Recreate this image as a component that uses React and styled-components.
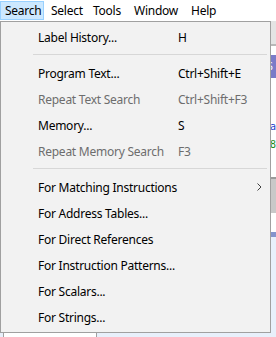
import React from "react";
import styled, { createGlobalStyle } from "styled-components";

const Global = createGlobalStyle`
  html, body { margin: 0; padding: 0; background: #ffffff; overflow: hidden; }
  * { box-sizing: border-box; }
`;

const Screen = styled.div`
  position: relative;
  width: 276px;
  height: 337px;
  overflow: hidden;
  font-family: "Noto Sans", "DejaVu Sans", sans-serif;
  font-size: 12px;
  letter-spacing: -0.25px;
  background: #ffffff;
`;

const MenuBar = styled.div`
  display: flex;
  align-items: stretch;
  height: 21px;
  padding: 1px 0 1px 0;
  background: #ffffff;
`;

const BarItem = styled.div`
  display: flex;
  align-items: center;
  width: ${(p) => p.$w}px;
  padding-left: ${(p) => p.$pl}px;
  color: #000;
  border: 1px solid ${(p) => (p.$active ? "#99d1ff" : "transparent")};
  background: ${(p) => (p.$active ? "#cce8ff" : "transparent")};
  line-height: 1;
  white-space: nowrap;
`;

const Workspace = styled.div`
  display: grid;
  grid-template-columns: 97px 1fr;
  height: 316px;
  background: #e8f0fb;
`;

const TreePanel = styled.div`
  margin-left: 3px;
  border-left: 1px solid #a0a0a0;
  border-right: 1px solid #a0a0a0;
  background: #ffffff;
`;

const RightArea = styled.div`
  display: flex;
  flex-direction: column;
`;

const ListingPanel = styled.div`
  display: flex;
  flex-direction: column;
  height: 216px;
  background: #ffffff;
  border-left: 1px solid #a0a0a0;
`;

const PanelHeader = styled.div`
  height: 25px;
  background: #e4e4e4;
  border-bottom: 2px solid #b8b8b8;
  flex-shrink: 0;
`;

const Row = styled.div`
  height: ${(p) => p.$h}px;
  display: flex;
  align-items: center;
  justify-content: flex-end;
  overflow: hidden;
  line-height: 1;
  font-family: "DejaVu Sans Mono", monospace;
  font-size: 10px;
  letter-spacing: 0;
  color: ${(p) => p.$color || "#000"};
  flex-shrink: 0;
`;

const Tag = styled.div`
  width: 10px;
  height: 23px;
  background: #7b7bc8;
  color: #fff;
  font-size: 10px;
  display: flex;
  align-items: center;
  padding-left: 1px;
`;

const Scroll = styled.div`
  height: 36px;
  margin: 4px 0;
  background: #c8c8c8;
  border-top: 2px solid #9a9a9a;
  flex-shrink: 0;
`;

const BlueBar = styled.div`
  margin-top: auto;
  height: 5px;
  background: #8494cc;
`;

const Popup = styled.div`
  position: absolute;
  left: 0;
  top: 21px;
  width: 271px;
  height: 312px;
  background: #f2f2f2;
  border: 1px solid #a0a0a0;
  padding: 2px 0;
  display: flex;
  flex-direction: column;
`;

const Item = styled.div`
  display: grid;
  grid-template-columns: 140px 1fr 13px;
  align-items: center;
  height: 26px;
  padding-left: 37px;
  color: ${(p) => (p.$disabled ? "#6d6d6d" : "#000000")};
  line-height: 1;
  white-space: nowrap;
`;

const Label = styled.span`
  padding-top: 1px;
`;

const Shortcut = styled.span`
  padding-top: 1px;
`;

const Separator = styled.div`
  height: 10px;
  padding: 4px 3px 0 32px;
  &::after {
    content: "";
    display: block;
    height: 1px;
    background: #d7d7d7;
  }
`;

const Arrow = () => (
  <svg width="5" height="8" viewBox="0 0 5 8">
    <path d="M0.5 0.5 L4 4 L0.5 7.5" stroke="#404040" strokeWidth="1" fill="none" />
  </svg>
);

const sections = [
  [{ label: "Label History...", key: "H" }],
  [
    { label: "Program Text...", key: "Ctrl+Shift+E" },
    { label: "Repeat Text Search", key: "Ctrl+Shift+F3", disabled: true },
    { label: "Memory...", key: "S" },
    { label: "Repeat Memory Search", key: "F3", disabled: true },
  ],
  [
    { label: "For Matching Instructions", sub: true },
    { label: "For Address Tables..." },
    { label: "For Direct References" },
    { label: "For Instruction Patterns..." },
    { label: "For Scalars..." },
    { label: "For Strings..." },
  ],
];

const barItems = [
  { t: "Search", active: true, w: 44, pl: 4 },
  { t: "Select", w: 42, pl: 6 },
  { t: "Tools", w: 41, pl: 6 },
  { t: "Window", w: 57, pl: 6 },
  { t: "Help", w: 36, pl: 6 },
];

export default function App() {
  return (
    <Screen>
      <Global />
      <MenuBar>
        {barItems.map((b) => (
          <BarItem key={b.t} $active={b.active} $w={b.w} $pl={b.pl}>
            {b.t}
          </BarItem>
        ))}
      </MenuBar>
      <Workspace>
        <TreePanel />
        <RightArea>
          <ListingPanel>
            <PanelHeader />
            <Row $h={9} />
            <Row $h={23}>
              <Tag>S</Tag>
            </Row>
            <Row $h={43} />
            <Row $h={12} $color="#1a3dcc">a</Row>
            <Row $h={6} />
            <Row $h={12} $color="#1a8a1a">8</Row>
            <Row $h={22} />
            <Scroll />
            <BlueBar />
          </ListingPanel>
        </RightArea>
      </Workspace>
      <Popup>
        {sections.map((sec, si) => (
          <React.Fragment key={si}>
            {si > 0 && <Separator />}
            {sec.map((it) => (
              <Item key={it.label} $disabled={it.disabled}>
                <Label>{it.label}</Label>
                <Shortcut>{it.key || ""}</Shortcut>
                {it.sub ? <Arrow /> : <span />}
              </Item>
            ))}
          </React.Fragment>
        ))}
      </Popup>
    </Screen>
  );
}
